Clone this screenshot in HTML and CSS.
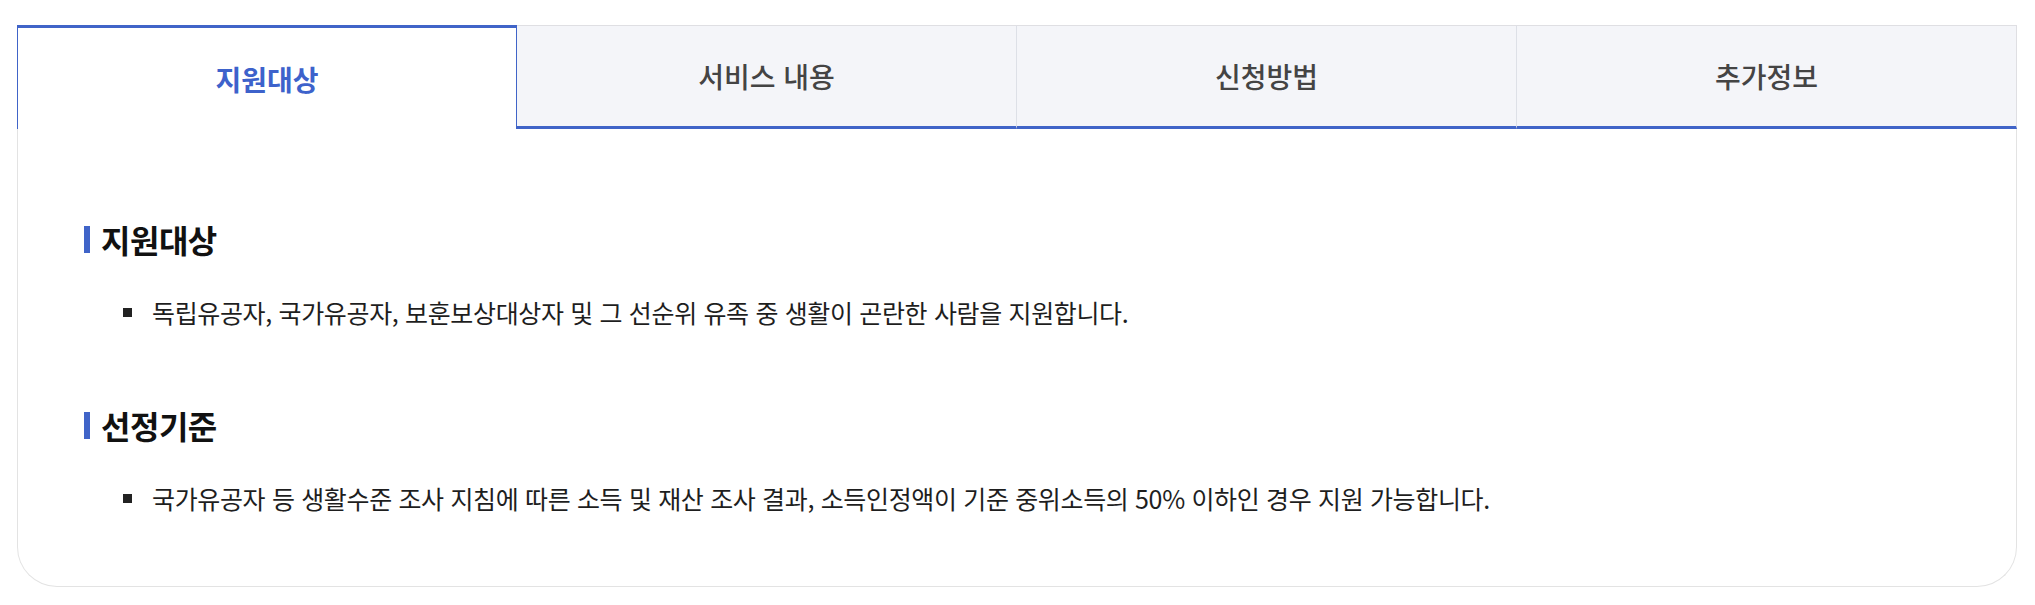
FILE: index.html
```html
<!DOCTYPE html>
<html lang="ko">

<head>
    <meta charset="utf-8">
    <title>지원대상</title>
    <link rel="stylesheet" href="styles.css">
</head>

<body>
    <div class="card">
        <!-- tabs -->
        <div class="tabs">
            <div class="tab active">지원대상</div>
            <div class="tab">서비스 내용</div>
            <div class="tab">신청방법</div>
            <div class="tab">추가정보</div>
        </div>

        <!-- panel -->
        <div class="panel">
            <div class="section">
                <h3 class="title">지원대상</h3>
                <ul class="list">
                    <li>독립유공자, 국가유공자, 보훈보상대상자 및 그 선순위 유족 중 생활이 곤란한 사람을 지원합니다.</li>
                </ul>
            </div>
            <div class="section">
                <h3 class="title">선정기준</h3>
                <ul class="list">
                    <li>국가유공자 등 생활수준 조사 지침에 따른 소득 및 재산 조사 결과, 소득인정액이 기준 중위소득의 50% 이하인 경우 지원 가능합니다.</li>
                </ul>
            </div>
        </div>
    </div>
</body>

</html>
```

FILE: styles.css
```css
/*
    benefit detail tabs
*/

* {
    box-sizing: border-box;
}

body {
    margin: 0;
    background-color: #ffffff;
    font-family: "Noto Sans CJK KR", "Noto Sans", sans-serif;
    color: #222222;
}

.card {
    margin: 25px 18px 0 17px;
}

.tabs {
    display: grid;
    grid-template-columns: repeat(4, 1fr);
}

.tab {
    height: 104px;
    display: flex;
    align-items: center;
    justify-content: center;
    background-color: #f4f5f9;
    border-top: 1px solid #dfdfe3;
    border-right: 1px solid #dde0e7;
    border-bottom: 3px solid #4064c8;
    font-size: 28px;
    font-weight: 500;
    color: #444444;
}

.tab:last-child {
    border-right-color: #dfdfe3;
}

.tab.active {
    background-color: #ffffff;
    border: 1px solid #4064c8;
    border-top-width: 3px;
    border-bottom: none;
    font-weight: 700;
    color: #3d62cb;
}

.panel {
    border: 1px solid #e3e3e3;
    border-top: none;
    border-radius: 0 0 40px 40px;
    padding: 92px 64px 71px 66px;
}

.section + .section {
    margin-top: 78px;
}

.title {
    display: flex;
    align-items: center;
    margin: 0;
    font-size: 32px;
    line-height: 36px;
    font-weight: 700;
    letter-spacing: -0.5px;
    color: #111111;
}

.title::before {
    content: "";
    width: 6px;
    height: 27px;
    margin-right: 11px;
    background-color: #4064c8;
}

.list {
    list-style: none;
    margin: 38px 0 0 0;
    padding: 0 0 0 39px;
}

.list li {
    display: flex;
    align-items: center;
    font-size: 25px;
    line-height: 34px;
    letter-spacing: -0.35px;
    color: #1e1e1e;
}

.list li::before {
    content: "";
    flex: none;
    width: 9px;
    height: 9px;
    margin-right: 20px;
    background-color: #222222;
}
```
